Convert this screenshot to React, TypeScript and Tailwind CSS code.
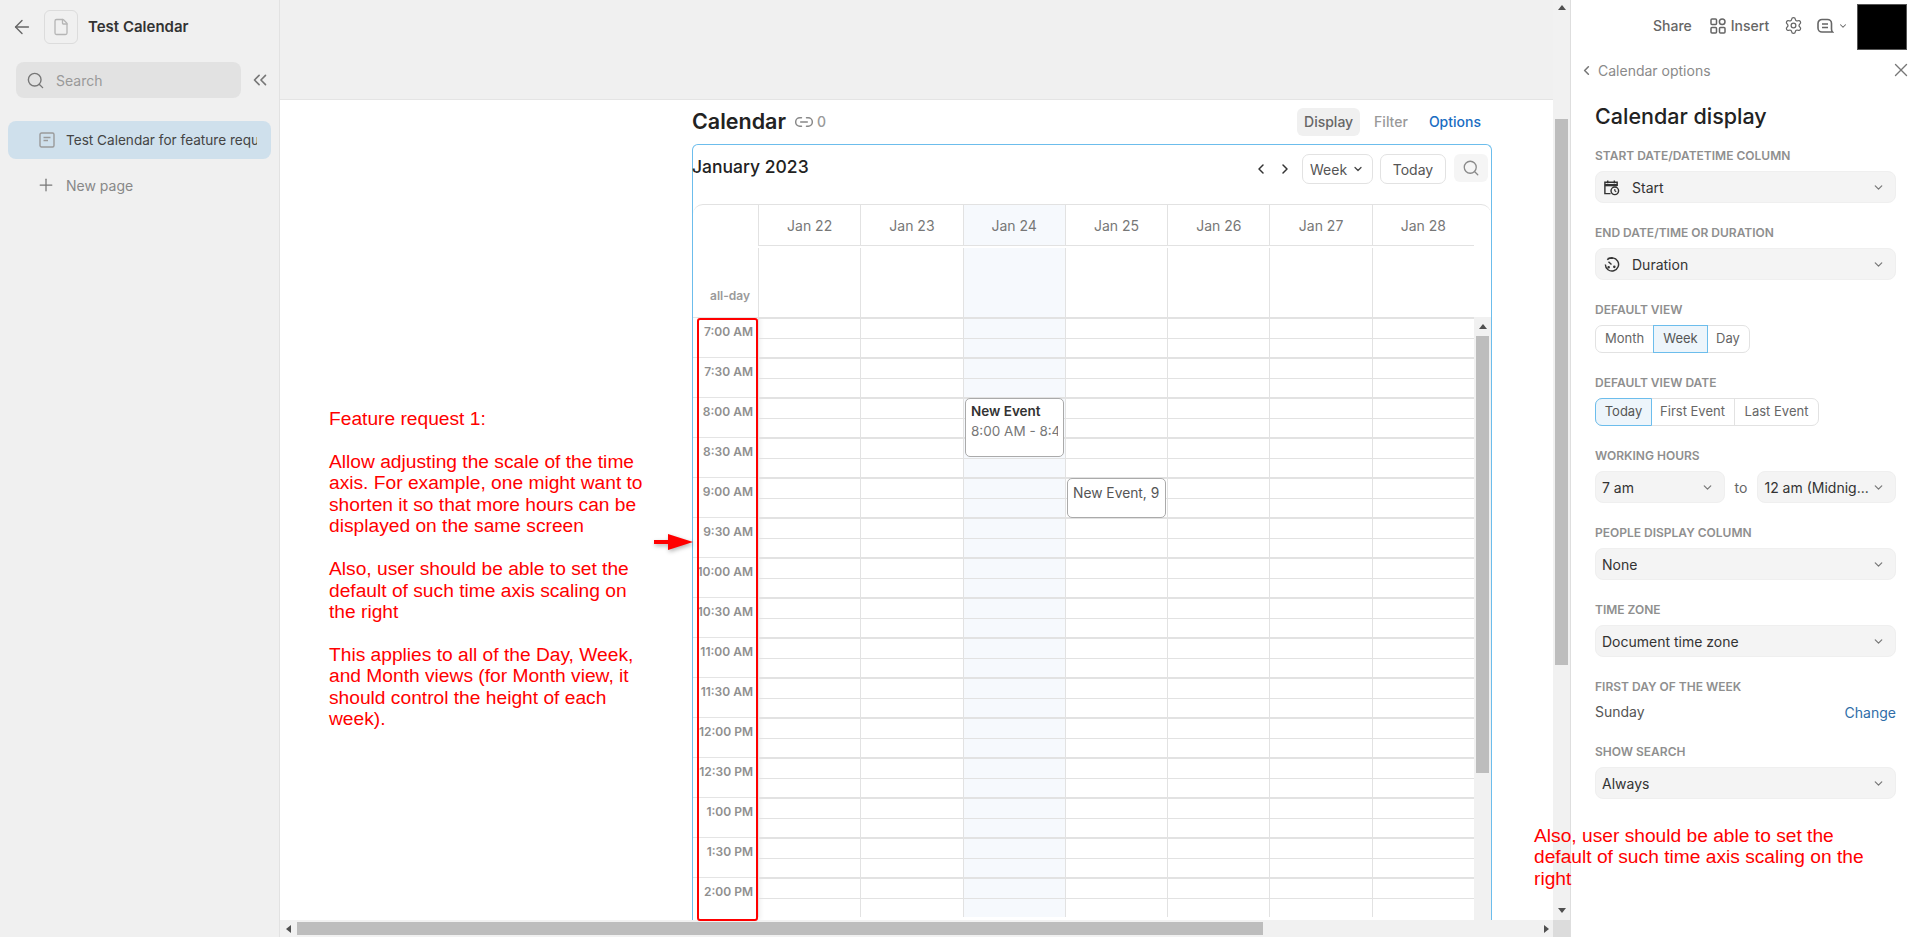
import {
  ArrowLeft,
  ChevronDown,
  ChevronLeft,
  ChevronRight,
  ChevronsLeft,
  File,
  Link2,
  Plus,
  Search,
  Settings,
  X,
} from 'lucide-react';

const times = [
  '7:00 AM',
  '7:30 AM',
  '8:00 AM',
  '8:30 AM',
  '9:00 AM',
  '9:30 AM',
  '10:00 AM',
  '10:30 AM',
  '11:00 AM',
  '11:30 AM',
  '12:00 PM',
  '12:30 PM',
  '1:00 PM',
  '1:30 PM',
  '2:00 PM',
];

const days = ['Jan 22', 'Jan 23', 'Jan 24', 'Jan 25', 'Jan 26', 'Jan 27', 'Jan 28'];

function Triangle({ dir, className }: { dir: 'up' | 'down' | 'left' | 'right'; className: string }) {
  const points = {
    up: '4,1 8,6 0,6',
    down: '0,2 8,2 4,7',
    left: '1,4 6,0 6,8',
    right: '2,0 7,4 2,8',
  }[dir];
  return (
    <svg viewBox="0 0 8 8" className={className} fill="#505050">
      <polygon points={points} />
    </svg>
  );
}

function Sidebar() {
  return (
    <aside className="flex h-full w-[280px] shrink-0 flex-col border-r border-[#e2e2e2] bg-[#f0f0f0]">
      <div className="flex h-[44px] items-center pt-[10px] pl-[11px]">
        <ArrowLeft className="size-[22px] text-[#666]" strokeWidth={1.5} />
        <div className="ml-[11px] flex size-[34px] items-center justify-center rounded-[6px] border border-[#dcdcdc]">
          <File className="size-[18px] text-[#b5b5b5]" strokeWidth={1.75} />
        </div>
        <span className="ml-[10px] text-[15px] font-semibold text-[#333]">Test Calendar</span>
      </div>
      <div className="mt-[18px] flex items-center pl-[16px]">
        <div className="flex h-[36px] w-[225px] items-center rounded-[8px] bg-[#e2e2e2] pl-[10px]">
          <Search className="size-[19px] text-[#777]" strokeWidth={1.75} />
          <span className="ml-[11px] text-[14px] text-[#999]">Search</span>
        </div>
        <ChevronsLeft className="ml-[8px] size-[22px] text-[#777]" strokeWidth={1.75} />
      </div>
      <div className="mt-[23px] ml-[8px] flex h-[38px] w-[263px] items-center rounded-[8px] bg-[#cfe0ec] pl-[31px]">
        <svg viewBox="0 0 16 16" className="size-[16px]" fill="none" stroke="#9a9a9a" strokeWidth="1.4">
          <rect x="1" y="1" width="14" height="14" rx="1.5" />
          <path d="M4.5 5.5h7M4.5 8.5h4.5" />
        </svg>
        <span className="ml-[11px] w-[191px] overflow-hidden text-[13.6px] whitespace-nowrap text-[#444]">
          Test Calendar for feature request
        </span>
      </div>
      <div className="mt-[7px] flex h-[38px] items-center pl-[36px]">
        <Plus className="size-[20px] text-[#777]" strokeWidth={1.5} />
        <span className="ml-[10px] text-[14px] text-[#888]">New page</span>
      </div>
    </aside>
  );
}

function Toolbar() {
  return (
    <div className="flex h-[59px] items-start justify-between pt-[9px]">
      <h2 className="-ml-px text-[17.5px] leading-[26px] font-medium text-[#222]">January 2023</h2>
      <div className="flex items-center pr-[3px]">
        <ChevronLeft className="size-[16px] text-[#333]" strokeWidth={2.25} />
        <ChevronRight className="ml-[8px] size-[16px] text-[#333]" strokeWidth={2.25} />
        <div className="ml-[9px] flex h-[30px] w-[71px] items-center rounded-[7px] border border-[#e2e2e2] pl-[7px] text-[14px] text-[#555]">
          Week
          <ChevronDown className="ml-[5px] size-[12px] text-[#444]" strokeWidth={2.5} />
        </div>
        <div className="ml-[7px] flex h-[30px] w-[66px] items-center justify-center rounded-[7px] border border-[#e2e2e2] text-[14px] text-[#555]">
          Today
        </div>
        <div className="ml-[8px] flex h-[28px] w-[34px] items-center justify-center self-start rounded-[6px] bg-[#f5f5f5]">
          <Search className="size-[18px] text-[#8a8a8a]" strokeWidth={1.75} />
        </div>
      </div>
    </div>
  );
}

function TimeGrid() {
  return (
    <div className="flex h-[603px] overflow-hidden">
      <div className="w-[65px] shrink-0 shadow-[2px_0_5px_rgba(0,0,0,0.08)]">
        {times.map((time) => (
          <div
            key={time}
            className="h-[40px] border-t border-[#e4e4e4] pt-[6px] pr-[5px] text-right text-[12px] leading-[16px] font-semibold text-[#8f8f8f]"
          >
            {time}
          </div>
        ))}
      </div>
      <div className="relative flex-1">
        {times.map((time) => (
          <div key={time} className="grid h-[40px] grid-cols-7 border-t-2 border-[#e2e2e2]">
            {days.map((day) => (
              <div
                key={day}
                className={`border-l border-[#e2e2e2] ${day === 'Jan 24' ? 'bg-[#f6f9fd]' : ''}`}
              >
                <div className="h-[20px] border-b border-[#e2e2e2]" />
              </div>
            ))}
          </div>
        ))}
        <div className="absolute top-[81px] left-[207px] h-[59px] w-[99px] rounded-[5px] border border-[#aaa] bg-white pt-[2px] pl-[5px] text-[13.5px] leading-[20px]">
          <div className="w-[87px] overflow-hidden font-semibold whitespace-nowrap text-[#333]">New Event</div>
          <div className="w-[87px] overflow-hidden whitespace-nowrap text-[#777]">8:00 AM - 8:45 AM</div>
        </div>
        <div className="absolute top-[161px] left-[309px] h-[40px] w-[99px] rounded-[5px] border border-[#aaa] bg-white pt-[4px] pl-[5px] text-[13.8px] leading-[20px] text-[#555]">
          <div className="w-[87px] overflow-hidden whitespace-nowrap">New Event, 9:00 AM</div>
        </div>
      </div>
      <div className="flex w-[17px] shrink-0 flex-col items-center bg-[#f1f1f1] pt-[2px]">
        <Triangle dir="up" className="mt-[4px] size-[8px]" />
        <div className="mt-[5px] h-[437px] w-[13px] bg-[#bdbdbd]" />
      </div>
    </div>
  );
}

function CalendarCard() {
  return (
    <div className="w-[800px] rounded-t-[6px] border-x border-t border-[#6cbdec]">
      <Toolbar />
      <div className="rounded-t-[10px] border-t border-[#e2e2e2]">
        <div className="flex h-[112px]">
          <div className="flex w-[65px] shrink-0 items-end justify-end pr-[8px] pb-[13px] text-[12px] leading-[16px] font-semibold text-[#9a9a9a]">
            all-day
          </div>
          <div className="w-[716px]">
            <div className="grid h-[41px] grid-cols-7 border-b border-[#e2e2e2]">
              {days.map((day) => (
                <div
                  key={day}
                  className={`flex items-center justify-center border-l border-[#e2e2e2] text-[14px] text-[#777] ${day === 'Jan 24' ? 'bg-[#f6f9fd]' : ''}`}
                >
                  {day}
                </div>
              ))}
            </div>
            <div className="mt-[2px] grid h-[69px] grid-cols-7">
              {days.map((day) => (
                <div
                  key={day}
                  className={`border-l border-[#e2e2e2] ${day === 'Jan 24' ? 'bg-[#f6f9fd]' : ''}`}
                />
              ))}
            </div>
          </div>
        </div>
        <TimeGrid />
      </div>
    </div>
  );
}

function CalendarPage() {
  return (
    <div className="relative flex min-w-0 flex-1 flex-col">
      <div className="flex flex-1 overflow-hidden">
        <div className="flex min-w-0 flex-1 flex-col">
          <div className="h-[100px] shrink-0 border-b border-[#e4e4e4] bg-[#f0f0f0]" />
          <div className="flex-1 overflow-hidden bg-white pl-[412px]">
            <div className="flex h-[44px] w-[799px] items-center pb-[1px]">
              <h1 className="text-[21.5px] font-semibold text-[#222]">Calendar</h1>
              <Link2 className="ml-[8px] size-[20px] text-[#888]" strokeWidth={1.75} />
              <span className="ml-[3px] text-[14px] font-medium text-[#999]">0</span>
              <div className="ml-auto flex items-center pr-[10px] text-[14px] font-medium">
                <div className="flex h-[28px] w-[63px] items-center justify-center rounded-[6px] bg-[#f0f0f0] text-[#666]">
                  Display
                </div>
                <span className="ml-[14px] text-[#999]">Filter</span>
                <span className="ml-[21px] text-[#1a6dc2]">Options</span>
              </div>
            </div>
            <CalendarCard />
          </div>
        </div>
        <div className="flex w-[17px] shrink-0 flex-col items-center bg-[#f1f1f1]">
          <Triangle dir="up" className="mt-[4px] size-[8px]" />
          <div className="mt-[107px] h-[546px] w-[13px] bg-[#bdbdbd]" />
          <Triangle dir="down" className="mt-[241px] size-[8px]" />
        </div>
      </div>
      <div className="flex h-[17px] shrink-0 items-center bg-[#f1f1f1]">
        <Triangle dir="left" className="ml-[5px] size-[8px]" />
        <div className="ml-[4px] h-[13px] w-[966px] bg-[#bdbdbd]" />
        <Triangle dir="right" className="ml-[279px] size-[8px]" />
        <div className="ml-auto h-[17px] w-[17px] bg-[#dcdcdc]" />
      </div>
    </div>
  );
}

function Label({ children }: { children: string }) {
  return <div className="text-[12px] leading-[16px] font-semibold text-[#8f8f8f] uppercase">{children}</div>;
}

function Select({ label, icon, className = 'mt-[7px] w-full' }: { label: string; icon?: React.ReactNode; className?: string }) {
  return (
    <div className={`flex h-[32px] items-center rounded-[8px] border border-[#efefef] bg-[#f4f4f4] pr-[10px] pl-[6px] text-[14px] text-[#333] ${className}`}>
      {icon}
      <span className={`truncate ${icon ? 'ml-[12px]' : ''}`}>{label}</span>
      <ChevronDown className="ml-auto size-[13px] shrink-0 text-[#777]" strokeWidth={2.25} />
    </div>
  );
}

function Segments({ items, active }: { items: [string, number][]; active: string }) {
  return (
    <div className="mt-[7px] flex h-[28px] w-fit rounded-[7px] border border-[#e2e2e2] text-[13px] text-[#666]">
      {items.map(([item, width]) => (
        <div
          key={item}
          style={{ width }}
          className={
            item === active
              ? '-m-px flex items-center justify-center border border-[#6cbdec] bg-[#edf5fb] text-[#555] first:rounded-l-[7px]'
              : 'flex items-center justify-center border-r border-[#e2e2e2] last:border-r-0'
          }
        >
          {item}
        </div>
      ))}
    </div>
  );
}

function OptionsPanel() {
  return (
    <aside className="w-[349px] shrink-0 bg-white">
      <div className="flex h-[54px] items-start pt-[4px] pl-[82px]">
        <div className="flex h-[43px] items-center text-[14px] font-medium text-[#666]">
          <span>Share</span>
          <svg viewBox="0 0 16 16" className="ml-[18px] size-[16px]" fill="none" stroke="#666" strokeWidth="1.5">
            <rect x="1" y="1" width="5.5" height="5.5" rx="1" />
            <rect x="1" y="9.5" width="5.5" height="5.5" rx="1" />
            <rect x="9.5" y="9.5" width="5.5" height="5.5" rx="1" />
            <circle cx="12.2" cy="3.8" r="2.8" />
          </svg>
          <span className="ml-[5px]">Insert</span>
          <Settings className="ml-[15px] size-[19px]" strokeWidth={1.6} />
          <svg viewBox="0 0 18 18" className="ml-[13px] size-[18px]" fill="none" stroke="#666" strokeWidth="1.6">
            <path d="M6 2.5h5.5a4 4 0 0 1 4 4V12c0 1.3.4 2.4 1 3H6a4 4 0 0 1-4-4V6.5a4 4 0 0 1 4-4z" />
            <path d="M6 7h6M6 10.5h6" />
          </svg>
          <ChevronDown className="ml-[4px] size-[10px]" strokeWidth={2.5} />
        </div>
        <div className="ml-[9px] h-[46px] w-[50px] border border-[#555] bg-black" />
      </div>
      <div className="flex h-[32px] items-center pr-[8px] pl-[8px] text-[14px] text-[#8a8a8a]">
        <ChevronLeft className="size-[15px] text-[#777]" strokeWidth={2.5} />
        <span className="ml-[4px]">Calendar options</span>
        <X className="ml-auto size-[22px] text-[#777]" strokeWidth={1.5} />
      </div>
      <div className="px-[24px]">
        <h2 className="mt-[16px] text-[21.5px] leading-[28px] font-medium text-[#222]">Calendar display</h2>
        <div className="mt-[18px] flex flex-col">
          <Label>Start date/datetime column</Label>
          <Select
            label="Start"
            icon={
              <svg viewBox="0 0 18 18" className="ml-[1px] size-[17px]" fill="none" stroke="#333" strokeWidth="1.5">
                <path d="M8 15.5H2V3.5h13v4" />
                <path d="M2 6.5h13" strokeWidth="2.5" />
                <path d="M5 1.5v3M12 1.5v3" />
                <circle cx="12.5" cy="12.5" r="4" />
                <path d="M12.5 10.5v2l1.5 1" strokeWidth="1.2" />
              </svg>
            }
          />
          <div className="mt-[22px]">
            <Label>End date/time or duration</Label>
          </div>
          <Select
            label="Duration"
            icon={
              <svg viewBox="0 0 18 18" className="ml-[1px] size-[17px]" fill="none" stroke="#333" strokeWidth="1.5">
                <path d="M4.5 4a7 7 0 1 1-2 5" />
                <path d="M5 2.5h5.5M9 9 5.8 6" />
                <circle cx="6" cy="12" r="0.6" />
                <circle cx="12" cy="11.5" r="0.6" />
              </svg>
            }
          />
          <div className="mt-[22px]">
            <Label>Default view</Label>
          </div>
          <Segments items={[['Month', 58], ['Week', 55], ['Day', 42]]} active="Week" />
          <div className="mt-[22px]">
            <Label>Default view date</Label>
          </div>
          <Segments items={[['Today', 57], ['First Event', 84], ['Last Event', 83]]} active="Today" />
          <div className="mt-[22px]">
            <Label>Working hours</Label>
          </div>
          <div className="mt-[7px] flex items-center">
            <Select label="7 am" className="w-[130px]" />
            <span className="mx-[10px] text-[14px] text-[#666]">to</span>
            <Select label="12 am (Midnig..." className="w-[139px]" />
          </div>
          <div className="mt-[22px]">
            <Label>People display column</Label>
          </div>
          <Select label="None" />
          <div className="mt-[22px]">
            <Label>Time zone</Label>
          </div>
          <Select label="Document time zone" />
          <div className="mt-[22px]">
            <Label>First day of the week</Label>
          </div>
          <div className="mt-[5px] flex h-[22px] items-center justify-between text-[14px]">
            <span className="text-[#555]">Sunday</span>
            <span className="translate-y-px text-[#2f6da8]">Change</span>
          </div>
          <div className="mt-[22px]">
            <Label>Show search</Label>
          </div>
          <Select label="Always" />
        </div>
      </div>
    </aside>
  );
}

export default function App() {
  return (
    <div className="relative flex h-[937px] w-[1920px] overflow-hidden bg-white font-['Inter',sans-serif]">
      <Sidebar />
      <CalendarPage />
      <div className="w-px shrink-0 bg-[#dedede]" />
      <OptionsPanel />

      {/* screenshot annotations drawn on top of the app */}
      <div className="pointer-events-none absolute top-[318px] left-[697px] h-[603px] w-[61px] rounded-[3px] border-2 border-[#f00]" />
      <svg
        viewBox="0 0 44 20"
        className="absolute top-[532px] left-[653px] h-[20px] w-[44px] drop-shadow-[1px_2px_2px_rgba(0,0,0,0.3)]"
      >
        <path d="M1 8h15v4H1z" fill="#f00" />
        <path d="M15 2 40 10 15 18z" fill="#f00" />
      </svg>
      <div className="absolute top-[408px] left-[329px] w-[320px] font-['Liberation_Sans',Arial,sans-serif] text-[19.2px] leading-[21.45px] text-[#f00]">
        <p>Feature request 1:</p>
        <p className="mt-[21.45px]">
          Allow adjusting the scale of the time axis. For example, one might want to shorten it so that more hours can
          be displayed on the same screen
        </p>
        <p className="mt-[21.45px]">
          Also, user should be able to set the default of such time axis scaling on the right
        </p>
        <p className="mt-[21.45px]">
          This applies to all of the Day, Week, and Month views (for Month view, it should control the height of each
          week).
        </p>
      </div>
      <div className="absolute top-[825px] left-[1534px] w-[340px] font-['Liberation_Sans',Arial,sans-serif] text-[19.2px] leading-[21.45px] text-[#f00]">
        Also, user should be able to set the default of such time axis scaling on the right
      </div>
    </div>
  );
}
